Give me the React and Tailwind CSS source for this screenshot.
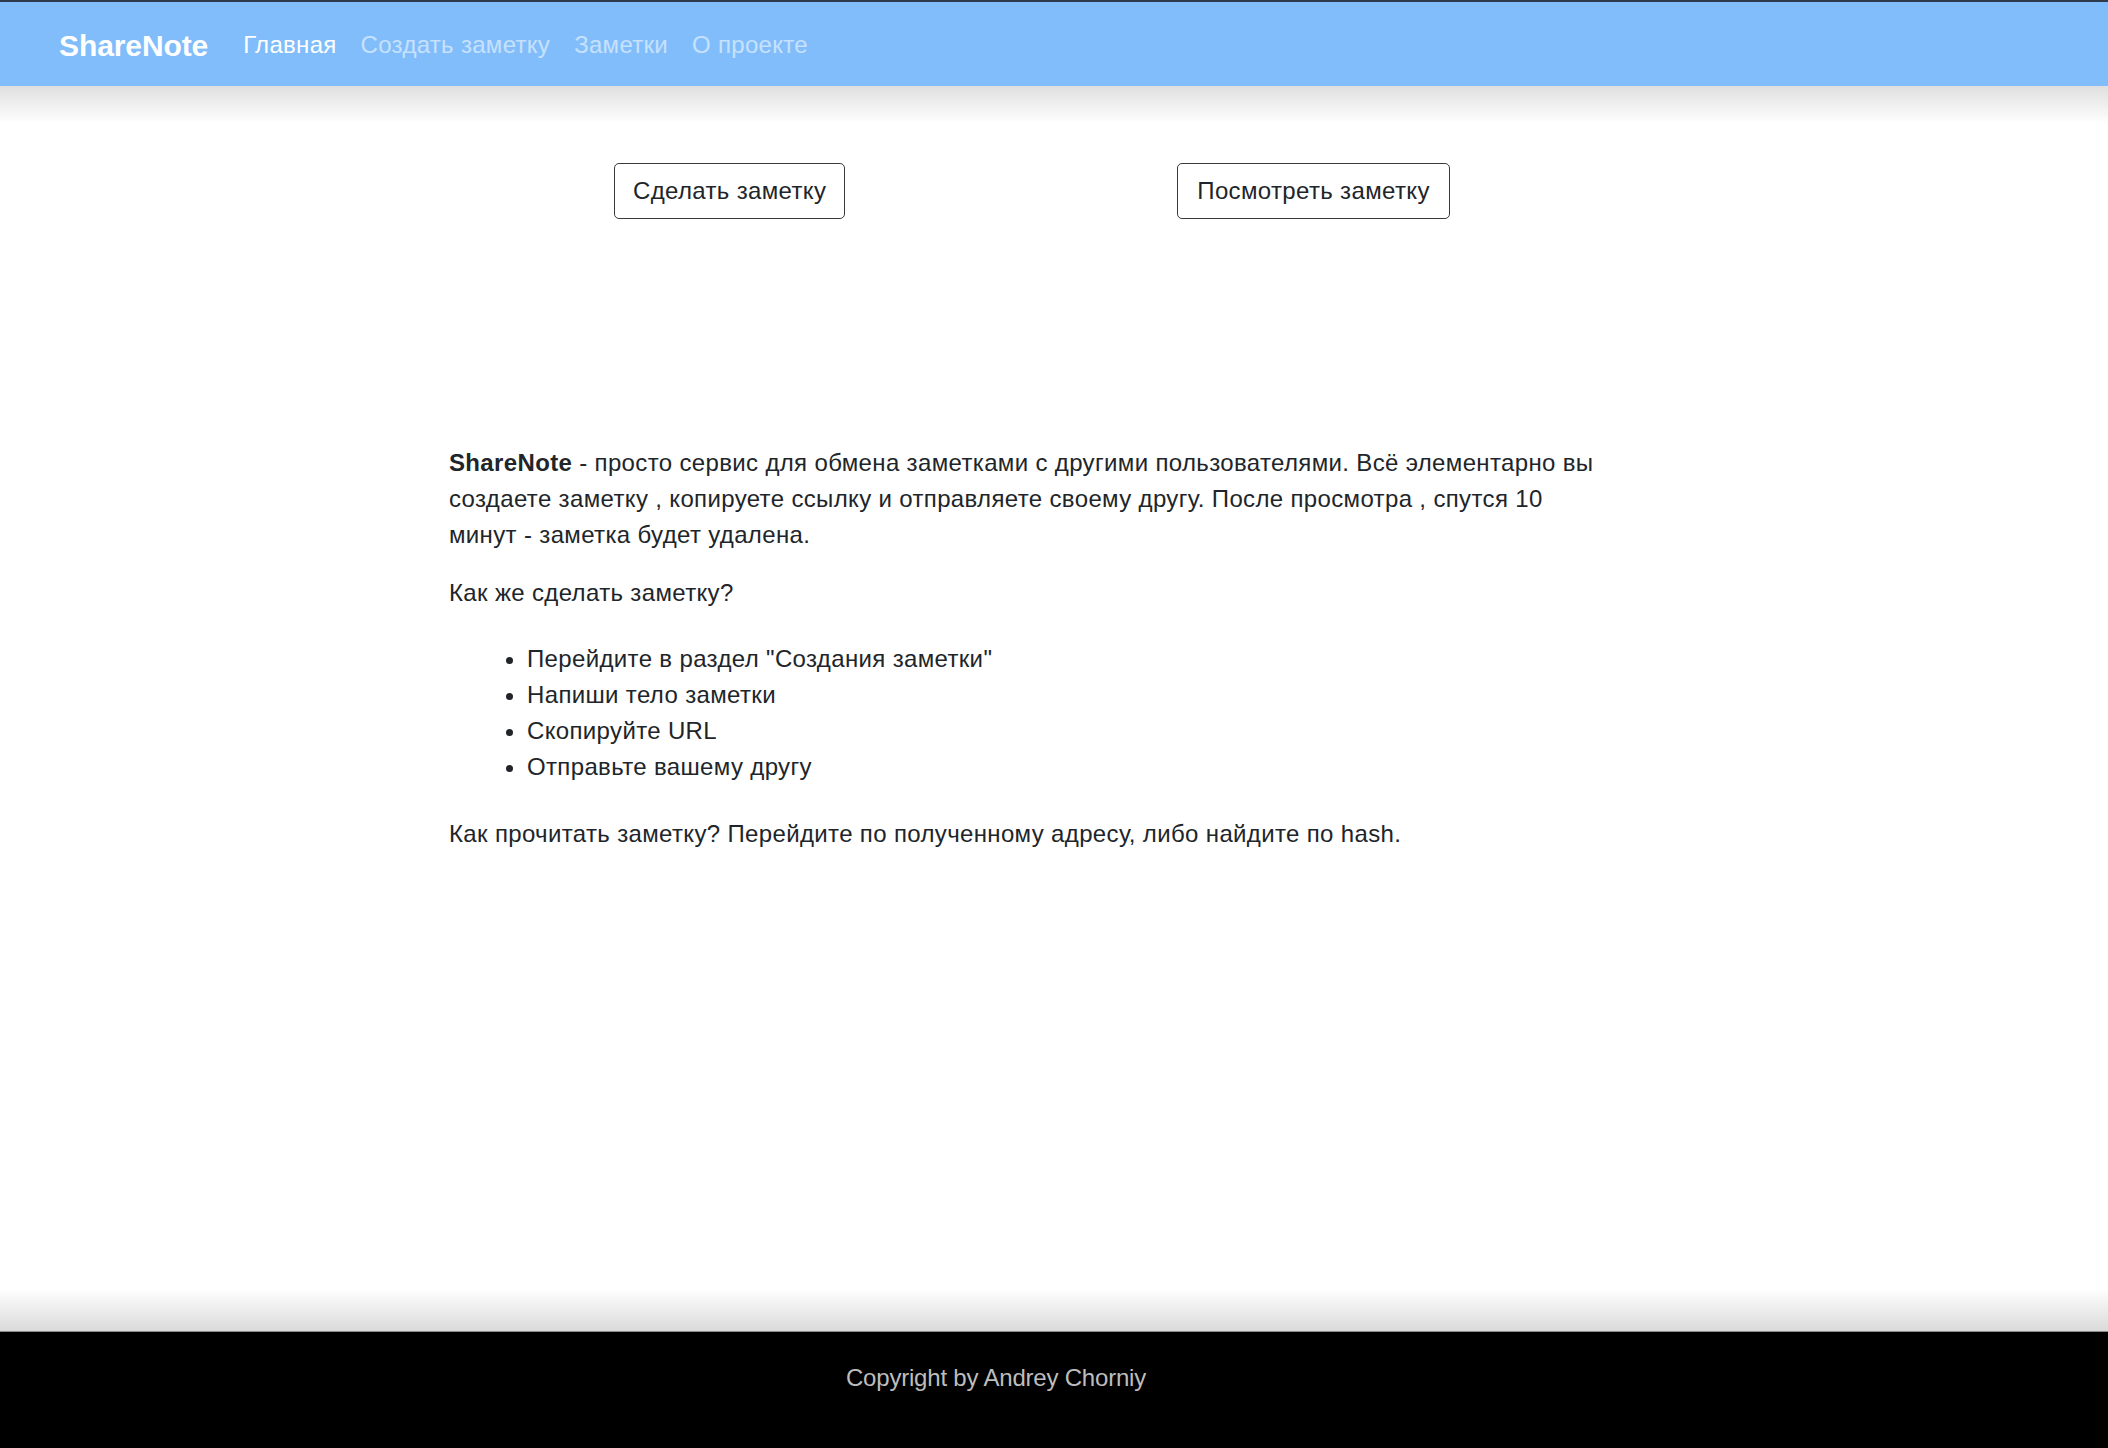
const navLinks = [
  { name: "Главная", active: true },
  { name: "Создать заметку" },
  { name: "Заметки" },
  { name: "О проекте" },
]

const steps = [
  'Перейдите в раздел "Создания заметки"',
  "Напиши тело заметки",
  "Скопируйте URL",
  "Отправьте вашему другу",
]

const App = () => {
  return (
    <div className="min-h-[1448px] flex flex-col bg-white text-[#212529] font-['Liberation_Sans',Arial,sans-serif] tracking-[0.35px]">
      {/* Navbar */}
      <nav className="h-[86px] border-t-2 border-[#2f3b4b] bg-[#80bdfa] flex items-center pl-[59px] pt-[2px]">
        <a className="text-[30px] font-bold text-white tracking-[-0.1px]">ShareNote</a>
        <ul className="flex items-center ml-[35px] gap-[24px] text-[24px] tracking-[0.3px]">
          {navLinks.map((link) => (
            <li key={link.name} className={link.active ? "text-white" : "text-white/55"}>
              {link.name}
            </li>
          ))}
        </ul>
      </nav>

      <main className="flex-1 flex flex-col bg-gradient-to-b from-[#dfdfdf] via-white via-[3%] to-white">
        {/* Buttons */}
        <div className="flex mt-[77px] ml-[614px] gap-[332px]">
          <button className="h-[56px] px-[18px] border-[1.5px] border-[#3a3a3a] rounded-[5px] text-[24px] bg-white">
            Сделать заметку
          </button>
          <button className="h-[56px] px-[19px] border-[1.5px] border-[#3a3a3a] rounded-[5px] text-[24px] bg-white">
            Посмотреть заметку
          </button>
        </div>

        {/* About */}
        <div className="mt-[226px] ml-[449px] w-[1220px] text-[24px] leading-[36px]">
          <p className="mb-[22px]">
            <b>ShareNote</b> - просто сервис для обмена заметками с другими пользователями. Всё элементарно вы
            <br />
            создаете заметку , копируете ссылку и отправляете своему другу. После просмотра , спутся 10
            <br />
            минут - заметка будет удалена.
          </p>
          <p className="mb-[30px]">Как же сделать заметку?</p>
          <ul className="list-disc pl-[78px] mb-[31px]">
            {steps.map((s) => (
              <li key={s}>{s}</li>
            ))}
          </ul>
          <p>Как прочитать заметку? Перейдите по полученному адресу, либо найдите по hash.</p>
        </div>

        <div className="flex-1" />
        <div className="h-[42px] bg-gradient-to-b from-white to-[#dadada]" />
      </main>

      {/* Footer */}
      <footer className="h-[117px] bg-black border-t border-[#8a8a8a] flex items-center justify-center pr-[116px]">
        <p className="text-[24px] text-[#bdbdbd] font-light tracking-[-0.2px] mt-[-24px]">
          Copyright by Andrey Chorniy
        </p>
      </footer>
    </div>
  )
}

export default App
